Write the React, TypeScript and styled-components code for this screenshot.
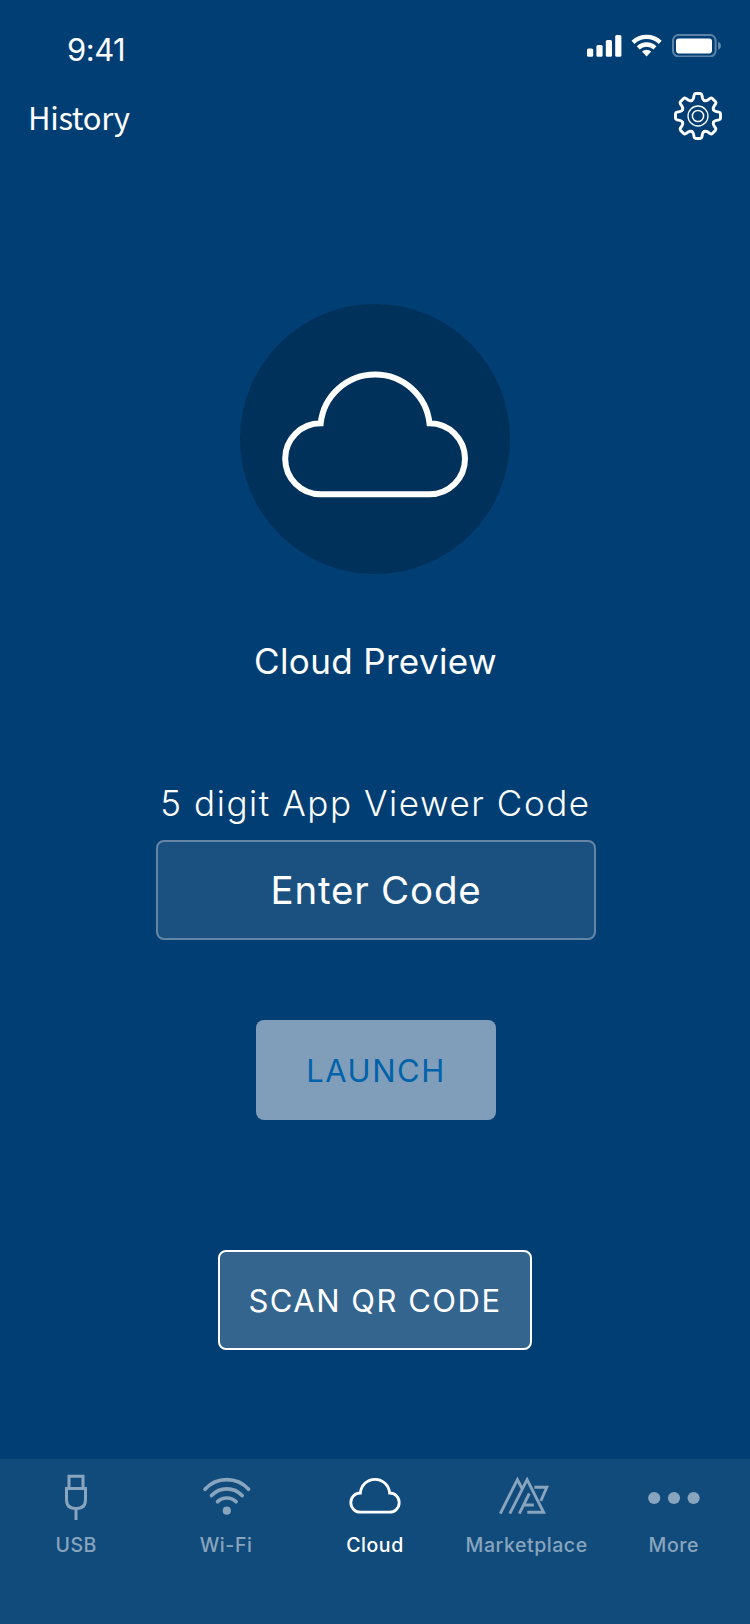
import React from "react";
import styled, { createGlobalStyle } from "styled-components";

const GlobalStyle = createGlobalStyle`
  *, *::before, *::after { box-sizing: border-box; }
  body { margin: 0; background: #003e74; }
  button, input { font: inherit; margin: 0; }
  svg { display: block; flex: none; }
`;

const Screen = styled.div`
  display: flex;
  flex-direction: column;
  width: 750px;
  height: 1624px;
  background: #003e74;
  color: #fff;
  font-family: Inter, "Liberation Sans", sans-serif;
  white-space: nowrap;
  overflow: hidden;
`;

const StatusBar = styled.header`
  display: flex;
  justify-content: space-between;
  height: 88px;
  padding: 30px 29px 0 67px;
`;

const Time = styled.time`
  font-size: 31px;
  line-height: 40px;
  letter-spacing: -0.5px;
`;

const StatusIcons = styled.div`
  display: flex;
  gap: 9px;
  padding-top: 3px;
`;

const NavBar = styled.nav`
  display: flex;
  justify-content: space-between;
  height: 56px;
  padding: 0 27px 0 28px;
`;

const HistoryLink = styled.button`
  border: 0;
  padding: 5px 0 0;
  background: none;
  color: inherit;
  font-family: "Noto Sans CJK SC", "Noto Sans", sans-serif;
  font-size: 31px;
  line-height: 46px;
  letter-spacing: -0.35px;
  height: 53px;
`;

const IconButton = styled.button`
  border: 0;
  padding: 2px 0 0;
  background: none;
  color: inherit;
  height: 54px;
`;

const Content = styled.main`
  flex: 1;
  display: flex;
  flex-direction: column;
  align-items: center;
  padding-top: 160px;
`;

const Badge = styled.div`
  display: grid;
  place-items: center;
  width: 270px;
  height: 270px;
  border-radius: 50%;
  background: #00315a;
`;

const Title = styled.h1`
  margin: 63px 0 0;
  padding-left: 1px;
  font-size: 35px;
  font-weight: 400;
  line-height: 48px;
  letter-spacing: 0.35px;
`;

const CodeLabel = styled.label`
  margin-top: 94px;
  padding-left: 1px;
  font-size: 35px;
  font-weight: 300;
  line-height: 48px;
  letter-spacing: 1.56px;
`;

const Box = styled.button<{ $width: number; $gap: number }>`
  display: flex;
  align-items: center;
  justify-content: center;
  width: ${(p) => p.$width}px;
  height: 100px;
  margin-top: ${(p) => p.$gap}px;
  padding: 2px 0 0;
  border: 2px solid transparent;
  border-radius: 8px;
  font-size: 31px;
  letter-spacing: 1.5px;
  line-height: 40px;
`;

const CodeField = styled(Box)`
  margin-left: 2px;
  padding-top: 0;
  border-color: #6685a5;
  background: #1a5181;
  color: #fff;
  font-size: 38.5px;
  letter-spacing: 0.8px;
`;

const LaunchButton = styled(Box)`
  margin-left: 2px;
  border: 0;
  background: #809eb9;
  color: #0062ab;
`;

const ScanButton = styled(Box)`
  border-color: #fff;
  background: #33658f;
  color: #fff;
`;

const TabBar = styled.nav`
  display: grid;
  grid-template-columns: repeat(5, 1fr);
  height: 165px;
  padding: 9px 1.5px 0;
  background: #114b7c;
`;

const Tab = styled.button<{ $active?: boolean }>`
  display: flex;
  flex-direction: column;
  align-items: center;
  border: 0;
  padding: 0;
  background: none;
  color: ${(p) => (p.$active ? "#fff" : "#88a5bd")};
`;

const TabLabel = styled.span<{ $indent?: number }>`
  margin-top: 4px;
  padding-left: ${(p) => p.$indent ?? 0}px;
  font-size: 19.5px;
  font-weight: 500;
  line-height: 26px;
  letter-spacing: 0.55px;
`;

function Signal() {
  return (
    <svg width="36" height="24" viewBox="586 33 36 24" fill="#fff">
      <rect x="587" y="48.5" width="6.2" height="8.2" rx="1.5" />
      <rect x="596.4" y="45" width="6.2" height="11.7" rx="1.5" />
      <rect x="605.8" y="40" width="6.2" height="16.7" rx="1.5" />
      <rect x="615.2" y="35" width="6.2" height="21.7" rx="1.5" />
    </svg>
  );
}

function StatusWifi() {
  return (
    <svg width="31" height="24" viewBox="631 33 31 24" fill="none" stroke="#fff" strokeWidth="4.3">
      <path d="M633 42.3A20 20 0 0 1 660.2 42.3" />
      <path d="M638.2 47.8A12.4 12.4 0 0 1 655 47.8" />
      <path d="M642 51.5A7 7 0 0 1 651.2 51.5L646.6 56.6Z" fill="#fff" stroke="none" />
    </svg>
  );
}

function Battery() {
  return (
    <svg width="50" height="24" viewBox="671 33 50 24">
      <rect x="673" y="35" width="42.6" height="21.4" rx="5.5" fill="none" stroke="#fff" strokeOpacity=".36" strokeWidth="2" />
      <rect x="676" y="38.4" width="36" height="15" rx="2.8" fill="#fff" />
      <path d="M718.2 41.5Q721 43 721 45.8T718.2 50Z" fill="#fff" fillOpacity=".42" />
    </svg>
  );
}

const tooth = "M-6.4-15.4Q-4.8-16.1-4.4-18.3L-3.9-21Q-3.6-22.5-2.2-22.5H2.2Q3.6-22.5 3.9-21L4.4-18.3Q4.8-16.1 6.4-15.4";

function Gear() {
  return (
    <svg width="50" height="50" viewBox="-25 -25 50 50" fill="none" stroke="currentColor" strokeLinecap="round">
      {[0, 45, 90, 135, 180, 225, 270, 315].map((angle) => (
        <path key={angle} d={tooth} transform={`rotate(${angle})`} strokeWidth="2.9" />
      ))}
      <circle r="10" strokeWidth="1.3" />
      <circle r="5.6" strokeWidth="1.5" />
    </svg>
  );
}

function BigCloud() {
  return (
    <svg width="186" height="128" viewBox="282 375 186 128" fill="none" stroke="#fff" strokeWidth="6" overflow="visible">
      <path d="M320.7 423.3A35.5 35.5 0 0 0 320.7 494.3H429.5A35.5 35.5 0 0 0 429.5 423.3A54.72 54.72 0 0 0 320.7 423.3Z" />
    </svg>
  );
}

function UsbIcon() {
  return (
    <svg width="60" height="60" viewBox="46 1468 60 60" fill="none" stroke="currentColor" strokeWidth="3">
      <path d="M69 1488V1476.2H83V1488M66.5 1488.5H85.5V1499.5Q85.5 1508.5 76.5 1508.5H75.5Q66.5 1508.5 66.5 1499.5ZM76 1508.5V1520" />
    </svg>
  );
}

function WifiIcon() {
  return (
    <svg width="60" height="60" viewBox="196.2 1468 60 60" fill="none" stroke="currentColor" strokeWidth="3.7" strokeLinecap="round">
      <path d="M205.2 1489.2A29.6 29.6 0 0 1 248.8 1489.2M211.7 1495.6A20.6 20.6 0 0 1 242.3 1495.6M217.8 1501.7A13.3 13.3 0 0 1 236.2 1501.7" />
      <circle cx="227" cy="1510.7" r="4.1" fill="currentColor" stroke="none" />
    </svg>
  );
}

function CloudIcon() {
  return (
    <svg width="60" height="60" viewBox="345 1468 60 60" fill="none" stroke="currentColor" strokeWidth="2.8">
      <path d="M360.4 1493A9.6 9.6 0 0 0 360.4 1512.2H389.6A9.6 9.6 0 0 0 389.6 1493A14.63 14.63 0 0 0 360.4 1493Z" />
    </svg>
  );
}

function MarketplaceIcon() {
  return (
    <svg width="60" height="60" viewBox="494.2 1468 60 60" fill="none" stroke="currentColor" strokeWidth="2.9">
      <path d="M500.5 1513.7L517.6 1479.6L522.5 1489M510 1513.7L527.3 1479.6L543.8 1512.3H527.5M519.5 1513.7L529.5 1493.5M525 1505H534M534.5 1487.3H547L541 1501" />
    </svg>
  );
}

function MoreIcon() {
  return (
    <svg width="60" height="60" viewBox="643.8 1468 60 60" fill="currentColor">
      <circle cx="654" cy="1498" r="6.1" />
      <circle cx="673.8" cy="1498" r="6.1" />
      <circle cx="693.4" cy="1498" r="6.1" />
    </svg>
  );
}

const tabs = [
  { label: "USB", Icon: UsbIcon },
  { label: "Wi-Fi", Icon: WifiIcon, indent: 1 },
  { label: "Cloud", Icon: CloudIcon, active: true },
  { label: "Marketplace", Icon: MarketplaceIcon, indent: 4.5 },
  { label: "More", Icon: MoreIcon },
];

export default function App() {
  return (
    <Screen>
      <GlobalStyle />
      <StatusBar>
        <Time>9:41</Time>
        <StatusIcons>
          <Signal />
          <StatusWifi />
          <Battery />
        </StatusIcons>
      </StatusBar>
      <NavBar>
        <HistoryLink>History</HistoryLink>
        <IconButton aria-label="Settings">
          <Gear />
        </IconButton>
      </NavBar>
      <Content>
        <Badge>
          <BigCloud />
        </Badge>
        <Title>Cloud Preview</Title>
        <CodeLabel>5 digit App Viewer Code</CodeLabel>
        <CodeField $width={440} $gap={13}>Enter Code</CodeField>
        <LaunchButton $width={240} $gap={80}>LAUNCH</LaunchButton>
        <ScanButton $width={314} $gap={130}>SCAN QR CODE</ScanButton>
      </Content>
      <TabBar>
        {tabs.map(({ label, Icon, active, indent }) => (
          <Tab key={label} $active={active}>
            <Icon />
            <TabLabel $indent={indent}>{label}</TabLabel>
          </Tab>
        ))}
      </TabBar>
    </Screen>
  );
}
